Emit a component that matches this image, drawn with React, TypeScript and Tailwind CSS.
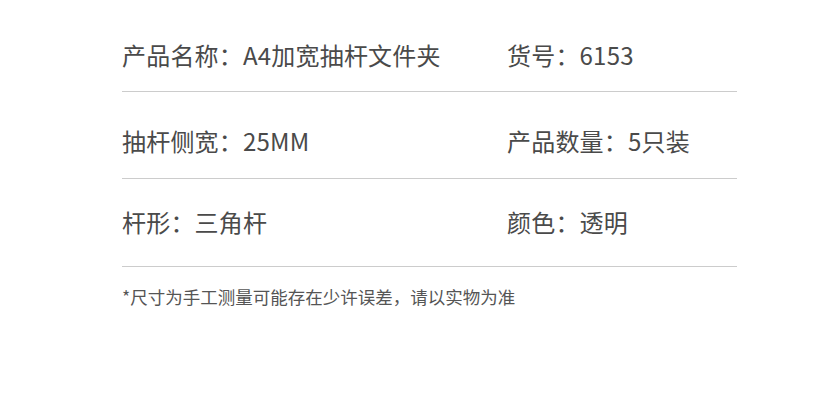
const rows = [
  { pt: 'pt-[37px]', h: 'h-[92px]', left: '产品名称：A4加宽抽杆文件夹', right: '货号：6153' },
  { pt: 'pt-[31px]', h: 'h-[87px]', left: '抽杆侧宽：25MM', right: '产品数量：5只装' },
  { pt: 'pt-[25px]', h: 'h-[88px]', left: '杆形：三角杆', right: '颜色：透明' },
];

export default function App() {
  return (
    <div
      className="h-[418px] w-[825px] bg-white pl-[122px] text-[#4a4a4a]"
      style={{ fontFamily: '"Noto Sans CJK SC", "Noto Sans", sans-serif' }}
    >
      <div className="w-[615px]">
        {rows.map((r) => (
          <div
            key={r.left}
            className={`grid grid-cols-[385px_1fr] border-b border-[#cccccc] ${r.pt} ${r.h}`}
          >
            <span className="text-[24px] leading-[36px] tracking-[0.2px]">{r.left}</span>
            <span className="text-[24px] leading-[36px] tracking-[0.2px]">{r.right}</span>
          </div>
        ))}
        <p className="mt-[18px] text-[17.5px] leading-[24px] text-[#555555]">
          *尺寸为手工测量可能存在少许误差，请以实物为准
        </p>
      </div>
    </div>
  );
}
